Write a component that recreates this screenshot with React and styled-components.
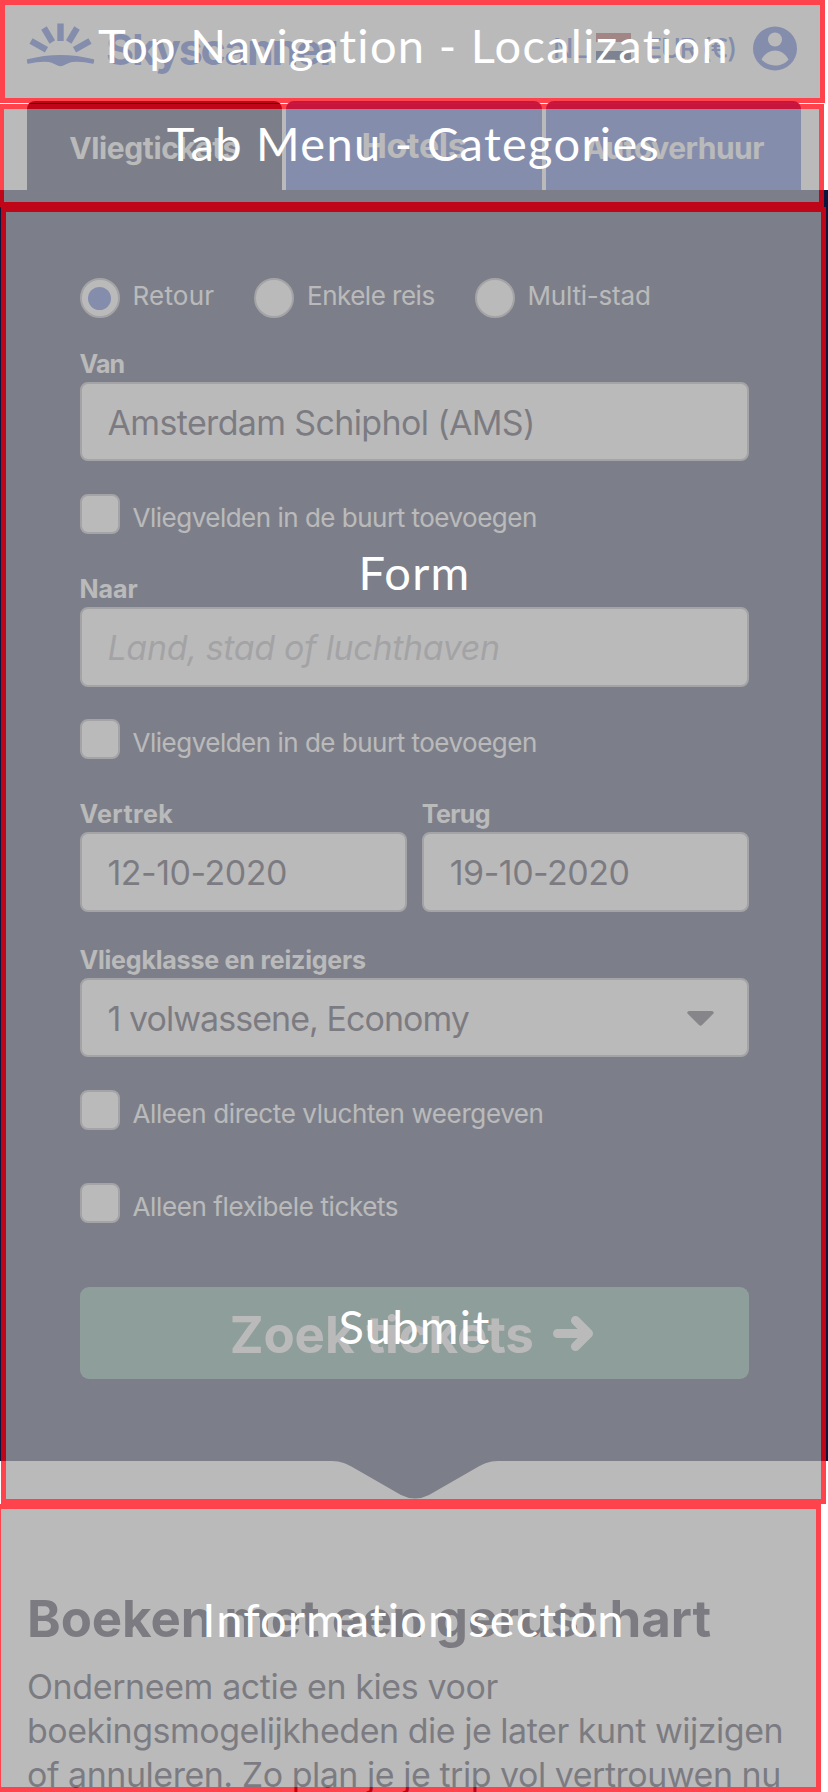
import React from "react";
import styled, { createGlobalStyle, css } from "styled-components";

const navy = "#0a143d";
const blue = "#2c4ec8";
const ink = "#05051c";

const GlobalStyle = createGlobalStyle`
  * { box-sizing: border-box; }
  html, body { margin: 0; padding: 0; background: #fff; overflow: hidden; }
  body { font-family: Inter, "Liberation Sans", sans-serif; }
  h2, p { margin: 0; }
`;

const Page = styled.div`
  position: relative;
  width: 828px;
  height: 1792px;
  overflow: hidden;
  background: #fff;
`;

const Header = styled.header`
  display: flex;
  align-items: flex-start;
  height: 101px;
  padding: 23px 31px 0 26px;
  color: ${blue};
`;

const Wordmark = styled.span`
  flex: none;
  margin: 4px 0 0 11px;
  width: 447px;
  font-size: 43px;
  line-height: 44px;
  font-weight: 700;
  letter-spacing: -2.2px;
`;

const Locale = styled.span`
  flex: none;
  margin-top: 9px;
  font-size: 27px;
  line-height: 33px;
  font-weight: 500;
  letter-spacing: ${(p) => p.$spacing || "0"};
  width: ${(p) => p.$width};
  white-space: nowrap;
`;

const Flag = styled.span`
  flex: none;
  width: 35px;
  height: 27px;
  margin: 10px 15px 0 0;
  background: linear-gradient(#a0322c 0 33.3%, #fff 33.3% 66.6%, #10245c 66.6%);
`;

const Tabs = styled.nav`
  display: flex;
  gap: 4.5px;
  height: 89px;
  padding: 0 26.5px;
`;

const Tab = styled.div`
  flex: 1;
  display: flex;
  justify-content: center;
  padding-top: ${(p) => (p.$large ? 27 : 29)}px;
  border-radius: 8px 8px 0 0;
  background: ${(p) => (p.$active ? navy : blue)};
  color: #fff;
  font-size: ${(p) => (p.$large ? 34 : 30)}px;
  line-height: 36px;
  font-weight: 700;
  letter-spacing: ${(p) => p.$spacing};
`;

const SearchForm = styled.section`
  height: 1271px;
  padding: 88px 79px 0 79.5px;
  background: ${navy};
  color: #fff;
`;

const RadioRow = styled.div`
  display: flex;
  height: 40px;
`;

const Choice = styled.div`
  display: flex;
  align-items: flex-start;
  width: ${(p) => p.$width || "auto"};
  margin-top: ${(p) => p.$gap || 0}px;
`;

const controlBox = css`
  flex: none;
  width: 40px;
  height: 40px;
  border: 2px solid #a8a8b4;
  background: #fff;
`;

const Radio = styled.span`
  ${controlBox}
  display: grid;
  place-items: center;
  border-radius: 50%;
  &::after {
    content: "";
    width: 23px;
    height: 23px;
    border-radius: 50%;
    background: ${(p) => (p.$checked ? blue : "transparent")};
  }
`;

const Checkbox = styled.span`
  ${controlBox}
  border-radius: 8px;
`;

const ChoiceText = styled.span`
  margin: ${(p) => p.$top}px 0 0 13px;
  font-size: 26px;
  line-height: 30px;
  letter-spacing: ${(p) => p.$spacing || "-0.5px"};
  white-space: nowrap;
`;

const FieldGroup = styled.div`
  flex: 1;
  margin-top: ${(p) => p.$gap || 0}px;
`;

const Label = styled.div`
  height: 33px;
  font-size: 25px;
  line-height: 30px;
  font-weight: 700;
  letter-spacing: ${(p) => p.$spacing || "-0.6px"};
`;

const Field = styled.div`
  display: flex;
  align-items: center;
  justify-content: space-between;
  height: 79.5px;
  padding: 2px 33px 0 26px;
  border: 2px solid #a8a8b4;
  border-radius: 8px;
  background: #fff;
  color: ${(p) => (p.$placeholder ? "#a5a5b0" : ink)};
  font-size: 34px;
  font-style: ${(p) => (p.$placeholder ? "italic" : "normal")};
  letter-spacing: ${(p) => p.$spacing || "-0.5px"};
  white-space: nowrap;
`;

const DateRow = styled.div`
  display: flex;
  gap: 15px;
  margin-top: 40px;
`;

const SubmitButton = styled.div`
  display: flex;
  align-items: center;
  justify-content: center;
  gap: 18px;
  height: 92.5px;
  margin-top: 63.5px;
  padding: 3px 5px 0 0;
  border-radius: 9px;
  background: #509080;
  font-size: 51px;
  font-weight: 700;
  letter-spacing: -0.1px;
`;

const Pointer = styled.svg`
  display: block;
  margin-left: 332px;
`;

const Info = styled.section`
  padding: 90px 0 0 27px;
  color: ${ink};
`;

const InfoTitle = styled.h2`
  font-size: 51px;
  line-height: 60px;
  letter-spacing: -0.1px;
  white-space: nowrap;
`;

const InfoText = styled.p`
  margin-top: 16px;
  font-size: 34px;
  line-height: 44.2px;
  white-space: nowrap;
`;

const InfoLine = styled.span`
  display: block;
  letter-spacing: ${(p) => p.$spacing};
`;

const Annotations = styled.div`
  position: absolute;
  inset: 0;
  display: flex;
  flex-direction: column;
  align-items: flex-start;
`;

const Frame = styled.div`
  flex: none;
  display: flex;
  flex-direction: column;
  align-items: center;
  width: 825px;
  height: ${(p) => p.$height}px;
  margin: ${(p) => p.$margin || "0"};
  padding-left: ${(p) => p.$inset || 2}px;
  border: 5px solid rgba(255, 2, 13, 0.74);
  background: rgba(163, 163, 163, 0.75) padding-box;
`;

const Caption = styled.div`
  margin-top: ${(p) => p.$top}px;
  color: #fff;
  font-family: Lato, sans-serif;
  font-size: 47px;
  line-height: 56px;
  letter-spacing: ${(p) => p.$spacing || "1.3px"};
  white-space: nowrap;
`;

const SunLogo = () => (
  <svg width="69" height="44" viewBox="0 0 69 44" fill="none" style={{ flex: "none" }}>
    <g stroke={blue} strokeWidth="6.4">
      <path d="M34.500 0.500v17.500M18 5l8.300 14M51 5L42.700 19M5 18l15.500 8.800M64 18l-15.500 8.800" />
    </g>
    <path
      d="M1.500 37Q34.500 28.500 67.500 37L67 40Q55 37.200 46 38.200C41 39 38 42.500 34.500 42.500C31 42.500 28 39 23 38.200Q14 37.200 2 40Z"
      fill={blue}
      stroke={blue}
      strokeWidth="1.500"
      strokeLinejoin="round"
    />
  </svg>
);

const Avatar = () => (
  <svg width="44" height="45" viewBox="0 0 44 45" style={{ flex: "none", marginTop: 3 }}>
    <circle cx="22" cy="22.500" r="22" fill={blue} />
    <circle cx="22" cy="13.500" r="7" fill="#fff" />
    <path d="M8.500 33.500C15 21.500 29 21.500 35.500 33.500C29 41.500 15 41.500 8.500 33.500Z" fill="#fff" />
  </svg>
);

const Arrow = () => (
  <svg width="42" height="38" viewBox="0 0 42 38" fill="none" stroke="#fff" strokeWidth="9" strokeLinecap="round" strokeLinejoin="round">
    <path d="M5.500 18.500H35M23.500 5.500L36.500 18.500L23.500 31.500" />
  </svg>
);

const Caret = () => (
  <svg width="27" height="15" viewBox="0 0 27 15">
    <path d="M2 0H25Q28 1 26 3L15 14Q13.500 15.500 12 14L1 3Q-1 1 2 0Z" fill="#2c2c42" />
  </svg>
);

export default function App() {
  return (
    <>
      <GlobalStyle />
      <Page>
        <Header>
          <SunLogo />
          <Wordmark>Skyscanner</Wordmark>
          <Locale $width="43px" $spacing="-0.3px">NL</Locale>
          <Flag />
          <Locale $width="107px" $spacing="-1.3px">EUR (€)</Locale>
          <Avatar />
        </Header>
        <Tabs>
          <Tab $active $spacing="-0.4px">Vliegtickets</Tab>
          <Tab $large $spacing="-0.3px">Hotels</Tab>
          <Tab $spacing="-0.5px">Autoverhuur</Tab>
        </Tabs>
        <SearchForm>
          <RadioRow>
            <Choice $width="174.5px"><Radio $checked /><ChoiceText $top={3} $spacing="0.2px">Retour</ChoiceText></Choice>
            <Choice $width="220.5px"><Radio /><ChoiceText $top={3}>Enkele reis</ChoiceText></Choice>
            <Choice><Radio /><ChoiceText $top={3} $spacing="-0.2px">Multi-stad</ChoiceText></Choice>
          </RadioRow>
          <FieldGroup $gap={30.5}>
            <Label $spacing="-0.8px">Van</Label>
            <Field $spacing="-0.65px">Amsterdam Schiphol (AMS)</Field>
          </FieldGroup>
          <Choice $gap={33}><Checkbox /><ChoiceText $top={9}>Vliegvelden in de buurt toevoegen</ChoiceText></Choice>
          <FieldGroup $gap={40}>
            <Label $spacing="0">Naar</Label>
            <Field $placeholder $spacing="-0.35px">Land, stad of luchthaven</Field>
          </FieldGroup>
          <Choice $gap={32.5}><Checkbox /><ChoiceText $top={9}>Vliegvelden in de buurt toevoegen</ChoiceText></Choice>
          <DateRow>
            <FieldGroup><Label $spacing="0.4px">Vertrek</Label><Field>12-10-2020</Field></FieldGroup>
            <FieldGroup><Label>Terug</Label><Field>19-10-2020</Field></FieldGroup>
          </DateRow>
          <FieldGroup $gap={33}>
            <Label $spacing="-0.2px">Vliegklasse en reizigers</Label>
            <Field $spacing="-0.95px">1 volwassene, Economy<Caret /></Field>
          </FieldGroup>
          <Choice $gap={33}><Checkbox /><ChoiceText $top={9} $spacing="-0.4px">Alleen directe vluchten weergeven</ChoiceText></Choice>
          <Choice $gap={53}><Checkbox /><ChoiceText $top={9} $spacing="-0.38px">Alleen flexibele tickets</ChoiceText></Choice>
          <SubmitButton>Zoek tickets<Arrow /></SubmitButton>
        </SearchForm>
        <Pointer width="166" height="38" viewBox="0 0 166 38">
          <path d="M0 0C9 0 15 3 22 7L69 34Q83 41 97 34L144 7C151 3 157 0 166 0Z" fill={navy} />
        </Pointer>
        <Info>
          <InfoTitle>Boeken met een gerust hart</InfoTitle>
          <InfoText>
            <InfoLine $spacing="-0.4px">Onderneem actie en kies voor</InfoLine>
            <InfoLine $spacing="-0.48px">boekingsmogelijkheden die je later kunt wijzigen</InfoLine>
            <InfoLine $spacing="-0.48px">of annuleren. Zo plan je je trip vol vertrouwen nu</InfoLine>
          </InfoText>
        </Info>
        <Annotations>
          <Frame $height={103}><Caption $top={12}>Top Navigation - Localization</Caption></Frame>
          <Frame $height={103} $margin="1px 0 0 -1px" $inset={4}><Caption $top={6}>Tab Menu - Categories</Caption></Frame>
          <Frame $height={1297} $margin="0 0 0 1px">
            <Caption $top={332}>Form</Caption>
            <Caption $top={698}>Submit</Caption>
          </Frame>
          <Frame $height={288} $margin="0 0 0 -4px" $inset={10}>
            <Caption $top={82} $spacing="1.1px">Information section</Caption>
          </Frame>
        </Annotations>
      </Page>
    </>
  );
}
